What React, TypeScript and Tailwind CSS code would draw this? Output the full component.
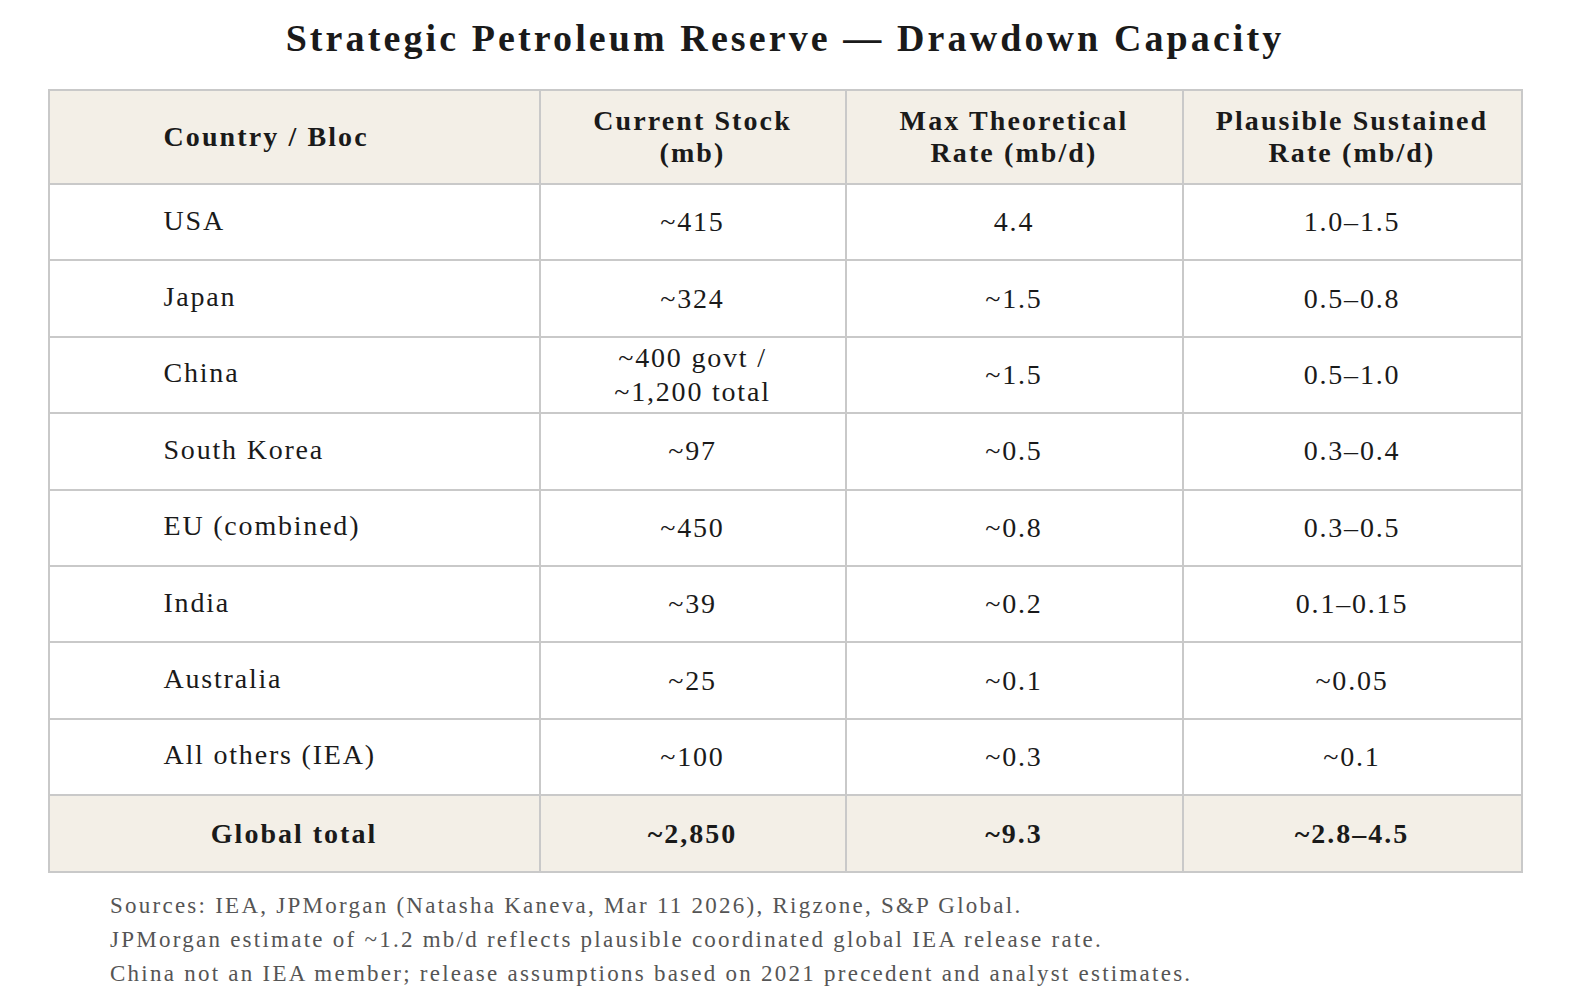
const rows = [
  ["USA", "~415", "4.4", "1.0–1.5"],
  ["Japan", "~324", "~1.5", "0.5–0.8"],
  ["China", "~400 govt /\n~1,200 total", "~1.5", "0.5–1.0"],
  ["South Korea", "~97", "~0.5", "0.3–0.4"],
  ["EU (combined)", "~450", "~0.8", "0.3–0.5"],
  ["India", "~39", "~0.2", "0.1–0.15"],
  ["Australia", "~25", "~0.1", "~0.05"],
  ["All others (IEA)", "~100", "~0.3", "~0.1"],
];

const cell = "border-2 border-[#c9c9c9]";

export default function App() {
  return (
    <div
      className="min-h-screen w-full bg-white text-[#1a1a1a]"
      style={{ fontFamily: '"Liberation Serif", "DejaVu Serif", serif' }}
    >
      <h1 className="pt-[15px] text-center text-[38px] font-bold leading-[46px] tracking-[3.1px]">
        Strategic Petroleum Reserve — Drawdown Capacity
      </h1>

      <table className="mx-auto mt-[28px] w-[1473px] table-fixed border-collapse border-2 border-[#c9c9c9] text-[28px]">
        <colgroup>
          <col className="w-[491px]" />
          <col className="w-[306px]" />
          <col className="w-[337px]" />
          <col className="w-[339px]" />
        </colgroup>
        <thead>
          <tr className="h-[94px] bg-[#f3efe7] font-bold leading-[32px] tracking-[2.1px]">
            <th className={`${cell} pl-[114px] text-left`}>Country / Bloc</th>
            <th className={`${cell} text-center`}>
              Current Stock
              <br />
              (mb)
            </th>
            <th className={`${cell} text-center`}>
              Max Theoretical
              <br />
              Rate (mb/d)
            </th>
            <th className={`${cell} text-center`}>
              Plausible Sustained
              <br />
              Rate (mb/d)
            </th>
          </tr>
        </thead>
        <tbody className="tracking-[1.8px]">
          {rows.map((r) => (
            <tr key={r[0]} className="h-[76.4px] leading-[34px]">
              <td className={`${cell} pl-[114px] pb-[3px] text-left`}>{r[0]}</td>
              <td className={`${cell} whitespace-pre-line text-center`}>{r[1]}</td>
              <td className={`${cell} text-center`}>{r[2]}</td>
              <td className={`${cell} text-center`}>{r[3]}</td>
            </tr>
          ))}
          <tr className="h-[77px] bg-[#f3efe7] font-bold tracking-[2px]">
            <td className={`${cell} text-center`}>Global total</td>
            <td className={`${cell} text-center`}>~2,850</td>
            <td className={`${cell} text-center`}>~9.3</td>
            <td className={`${cell} text-center`}>~2.8–4.5</td>
          </tr>
        </tbody>
      </table>

      <div className="ml-[110px] mt-[16px] text-[23px] leading-[34px] tracking-[2.25px] text-[#555555]">
        <p>Sources: IEA, JPMorgan (Natasha Kaneva, Mar 11 2026), Rigzone, S&amp;P Global.</p>
        <p>JPMorgan estimate of ~1.2 mb/d reflects plausible coordinated global IEA release rate.</p>
        <p>China not an IEA member; release assumptions based on 2021 precedent and analyst estimates.</p>
      </div>
    </div>
  );
}
